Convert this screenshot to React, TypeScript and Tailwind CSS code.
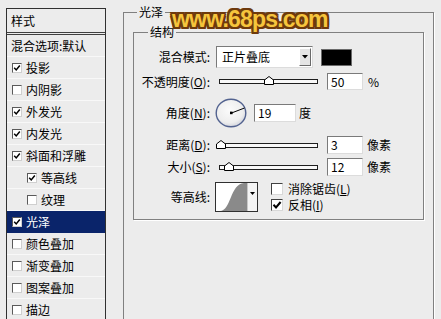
import React from "react";

type Item = { t: string; cb?: boolean; sub?: boolean; sel?: boolean };

const items: Item[] = [
  { t: "混合选项:默认" },
  { t: "投影", cb: true },
  { t: "内阴影", cb: false },
  { t: "外发光", cb: true },
  { t: "内发光", cb: true },
  { t: "斜面和浮雕", cb: true },
  { t: "等高线", cb: true, sub: true },
  { t: "纹理", cb: false, sub: true },
  { t: "光泽", cb: true, sel: true },
  { t: "颜色叠加", cb: false },
  { t: "渐变叠加", cb: false },
  { t: "图案叠加", cb: false },
  { t: "描边", cb: false },
];

function SmallCheck({ on }: { on: boolean }) {
  return (
    <span className="w-[10px] h-[10px] shrink-0 bg-white border border-t-[#5a5a5a] border-l-[#5a5a5a] border-r-[#cfcfcf] border-b-[#cfcfcf] flex items-center justify-center">
      {on && (
        <svg width="8" height="8" viewBox="0 0 8 8">
          <path d="M1.2 3.8 L3.2 5.9 L6.8 1.6" fill="none" stroke="#000" strokeWidth="1.5" />
        </svg>
      )}
    </span>
  );
}

function BigCheck({ on }: { on: boolean }) {
  return (
    <span className="w-[12px] h-[12px] shrink-0 bg-white border border-t-[#404040] border-l-[#404040] border-r-[#d8d8d8] border-b-[#d8d8d8] flex items-center justify-center">
      {on && (
        <svg width="10" height="10" viewBox="0 0 10 10">
          <path d="M1.5 4.8 L4 7.4 L8.6 2" fill="none" stroke="#000" strokeWidth="2" />
        </svg>
      )}
    </span>
  );
}

function Thumb() {
  return (
    <svg width="10" height="9" viewBox="0 0 10 9">
      <polygon points="0.5,4 5,0.5 9.5,4 9.5,8.5 0.5,8.5" fill="#fff" stroke="#000" strokeWidth="1" />
    </svg>
  );
}

function Field({ children, w }: { children: React.ReactNode; w: string }) {
  return (
    <div
      className={
        "bg-white border border-t-[#7a7a7a] border-l-[#7a7a7a] border-r-[#dcdcdc] border-b-[#dcdcdc] pl-[3px] flex items-center leading-none " +
        w
      }
    >
      {children}
    </div>
  );
}

function Label({ children }: { children: React.ReactNode }) {
  return <span className="w-[76px] shrink-0 text-right leading-none">{children}</span>;
}

export default function App() {
  return (
    <div className="relative w-[441px] h-[319px] overflow-hidden bg-[#ececec] flex items-start text-[12px] text-black font-['Noto_Sans_CJK_SC','Noto_Sans',sans-serif]">
      {/* Styles list */}
      <div className="ml-[6px] mt-[8px] w-[100px] h-[330px] shrink-0 border-l border-t border-r border-[#303030]">
        <div className="h-[26px] pl-[4px] flex items-center border-b-[3px] border-double border-[#404040] leading-none">
          样式
        </div>
        {items.map((it) => (
          <div
            key={it.t}
            className={
              "h-[22px] flex items-center leading-none border-b " +
              (it.sel ? "bg-[#0a246a] text-white border-[#0a246a]" : "border-[#f8f8f8]") +
              (it.cb === undefined ? " pl-[4px]" : it.sub ? " pl-[20px]" : " pl-[5px]")
            }
          >
            {it.cb !== undefined && <SmallCheck on={it.cb} />}
            <span className={it.cb !== undefined ? "ml-[4px]" : ""}>{it.t}</span>
          </div>
        ))}
      </div>

      {/* Satin group */}
      <fieldset className="ml-[17px] mt-[4px] w-[311px] h-[330px] shrink-0 border border-[#808080] shadow-[1px_1px_0_#fff]">
        <legend className="ml-[13px] px-[2px] leading-[16px]">光泽</legend>
        <fieldset className="ml-[9px] mt-[4px] w-[291px] border border-[#808080] pt-[6px] pb-[7px] shadow-[1px_1px_0_#fff]">
          <legend className="ml-[14px] px-[2px] leading-[16px]">结构</legend>

          {/* Blend mode */}
          <div className="flex items-center h-[22px]">
            <Label>混合模式:</Label>
            <div className="ml-[6px] w-[97px] h-[22px] bg-white border border-t-[#7a7a7a] border-l-[#7a7a7a] border-r-[#dcdcdc] border-b-[#dcdcdc] flex items-center pl-[5px]">
              <span className="flex-1 leading-none">正片叠底</span>
              <span className="w-[12px] h-[18px] mr-[1px] bg-[#e4e4e4] border border-t-white border-l-white border-r-[#6a6a6a] border-b-[#6a6a6a] flex items-center justify-center">
                <svg width="6" height="4" viewBox="0 0 6 4">
                  <polygon points="0,0 6,0 3,3.5" fill="#000" />
                </svg>
              </span>
            </div>
            <div className="ml-[8px] w-[31px] h-[17px] bg-black border border-[#6a6a6a]" />
          </div>

          {/* Opacity */}
          <div className="flex items-center h-[17px] mt-[5px]">
            <Label>
              不透明度(<span className="underline">O</span>):
            </Label>
            <div className="relative ml-[9px] w-[99px] h-[5px] border border-[#1e1e1e] bg-[#f8f8f8]">
              <span className="absolute left-[44px] top-[-4px]">
                <Thumb />
              </span>
            </div>
            <Field w="ml-[9px] w-[36px] h-[17px]">50</Field>
            <span className="ml-[5px] leading-none">%</span>
          </div>

          {/* Angle */}
          <div className="flex items-center h-[30px] mt-[8px]">
            <Label>
              角度(<span className="underline">N</span>):
            </Label>
            <svg className="ml-[5px] shrink-0" width="32" height="30" viewBox="0 0 32 30">
              <defs>
                <radialGradient id="dial" cx="45%" cy="40%" r="60%">
                  <stop offset="0" stopColor="#fbfbfb" />
                  <stop offset="0.75" stopColor="#eeeeee" />
                  <stop offset="1" stopColor="#d4d6de" />
                </radialGradient>
              </defs>
              <ellipse cx="16" cy="15" rx="14.8" ry="13.8" fill="url(#dial)" stroke="#52628f" strokeWidth="1.4" />
              <line x1="16.5" y1="15" x2="29.5" y2="10" stroke="#000" strokeWidth="1" />
              <rect x="15" y="13.6" width="2.6" height="2.6" fill="#000" />
            </svg>
            <Field w="ml-[7px] w-[42px] h-[18px]">19</Field>
            <span className="ml-[3px] leading-none">度</span>
          </div>

          {/* Distance */}
          <div className="flex items-center h-[18px] mt-[8px]">
            <Label>
              距离(<span className="underline">D</span>):
            </Label>
            <div className="relative ml-[9px] w-[99px] h-[5px] border border-[#1e1e1e] bg-[#f8f8f8]">
              <span className="absolute left-[-4px] top-[-4px]">
                <Thumb />
              </span>
            </div>
            <Field w="ml-[9px] w-[36px] h-[18px]">3</Field>
            <span className="ml-[4px] leading-none">像素</span>
          </div>

          {/* Size */}
          <div className="flex items-center h-[18px] mt-[4px]">
            <Label>
              大小(<span className="underline">S</span>):
            </Label>
            <div className="relative ml-[9px] w-[99px] h-[5px] border border-[#1e1e1e] bg-[#f8f8f8]">
              <span className="absolute left-[4px] top-[-4px]">
                <Thumb />
              </span>
            </div>
            <Field w="ml-[9px] w-[36px] h-[18px]">12</Field>
            <span className="ml-[4px] leading-none">像素</span>
          </div>

          {/* Contour */}
          <div className="flex items-center h-[30px] mt-[6px]">
            <Label>等高线:</Label>
            <div className="ml-[5px] w-[43px] h-[30px] shrink-0 flex border border-[#303030] bg-white">
              <svg width="31" height="28" viewBox="0 0 31 28">
                <path d="M4 28 C15 28 14 1 28 0 L31 0 L31 28 Z" fill="#8a8a8a" />
              </svg>
              <div className="flex-1 bg-[#f4f4f4] border-l border-[#c8c8c8] flex items-start justify-center pt-[9px]">
                <svg width="5" height="3" viewBox="0 0 5 3">
                  <polygon points="0,0 5,0 2.5,3" fill="#000" />
                </svg>
              </div>
            </div>
            <div className="ml-[13px] flex flex-col gap-[2px]">
              <div className="h-[14px] flex items-center">
                <BigCheck on={false} />
                <span className="ml-[5px] leading-none">
                  消除锯齿(<span className="underline">L</span>)
                </span>
              </div>
              <div className="h-[14px] flex items-center">
                <BigCheck on={true} />
                <span className="ml-[5px] leading-none">
                  反相(<span className="underline">I</span>)
                </span>
              </div>
            </div>
          </div>
        </fieldset>
      </fieldset>

      {/* Watermark */}
      <span className="absolute left-[172px] top-[8px] text-[23px] leading-none font-bold tracking-[-0.8px] text-[#f6c53c] font-['Liberation_Sans',Arial,sans-serif] [text-shadow:2px_0_#6e3a0c,-2px_0_#6e3a0c,0_2px_#6e3a0c,0_-2px_#6e3a0c,2px_2px_#6e3a0c,-2px_-2px_#6e3a0c,2px_-2px_#6e3a0c,-2px_2px_#6e3a0c]">
        www.68ps.com
      </span>
    </div>
  );
}
